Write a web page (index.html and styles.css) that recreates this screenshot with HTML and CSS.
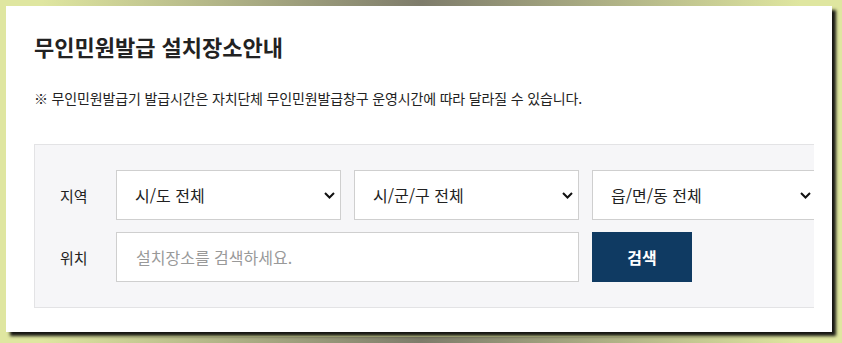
FILE: index.html
```html
<!DOCTYPE html>
<html lang="ko">
<head>
    <meta charset="UTF-8">
    <meta name="viewport" content="width=device-width, initial-scale=1.0">
    <title>무인민원발급 설치장소안내</title>
    <link rel="stylesheet" href="styles.css">
</head>
<body>
    <div class="card">
        <h2 class="title">무인민원발급 설치장소안내</h2>
        <p class="notice">※ 무인민원발급기 발급시간은 자치단체 무인민원발급창구 운영시간에 따라 달라질 수 있습니다.</p>

        <div class="search-clip">
            <div class="search-box">
                <div class="search-row">
                    <span class="label">지역</span>
                    <select class="select">
                        <option>시/도 전체</option>
                    </select>
                    <select class="select">
                        <option>시/군/구 전체</option>
                    </select>
                    <select class="select">
                        <option>읍/면/동 전체</option>
                    </select>
                </div>
                <div class="search-row">
                    <span class="label">위치</span>
                    <input type="text" class="keyword" placeholder="설치장소를 검색하세요.">
                    <button class="search-btn">검색</button>
                </div>
            </div>
        </div>
    </div>
</body>
</html>
```

FILE: styles.css
```css
html, body {
    height: 100%;
}
body {
    margin: 0;
    padding: 6px 0 0 6px;
    box-sizing: border-box;
    overflow: hidden;
    background-color: #dfe6a0;
    background-image:
        linear-gradient(to right, #dfe6a0 5%, #7e7c6b 50%, #dfe6a0 95%),
        linear-gradient(to right, #dfe6a0 5%, #7e7c6b 50%, #dfe6a0 95%);
    background-size: 100% 6px, 100% 6px;
    background-position: top, bottom;
    background-repeat: no-repeat;
    font-family: "Noto Sans CJK KR", "Noto Sans", sans-serif;
    color: #222;
}
.card {
    width: 826px;
    height: 326px;
    box-sizing: border-box;
    padding: 22px 18px 0 28px;
    background-color: #fff;
    box-shadow: 4px 4px 3px #161612;
}
.title {
    margin: 0;
    font-size: 22px;
    font-weight: 700;
    line-height: 36px;
    letter-spacing: 0;
    color: #222;
}
.notice {
    margin: 22px 0 0;
    font-size: 14px;
    line-height: 24px;
    letter-spacing: -0.15px;
    color: #222;
}
.search-clip {
    margin-top: 34px;
    overflow: hidden;
}
.search-box {
    width: 820px;
    box-sizing: border-box;
    padding: 25px 0 25px 25px;
    background-color: #f6f6f8;
    border: 1px solid #e3e3e5;
    display: flex;
    flex-direction: column;
    gap: 12px;
}
.search-row {
    display: flex;
    align-items: center;
    gap: 13px;
}
.label {
    width: 43px;
    font-size: 15px;
    color: #222;
}
.select {
    flex: none;
    width: 225px;
    height: 50px;
    padding: 0 30px 0 18px;
    border: 1px solid #cfcfcf;
    border-radius: 0;
    background: #fff url("data:image/svg+xml,%3Csvg xmlns='http://www.w3.org/2000/svg' width='11' height='7' viewBox='0 0 11 7'%3E%3Cpath d='M1 1l4.5 4.5L10 1' fill='none' stroke='%23111' stroke-width='2'/%3E%3C/svg%3E") no-repeat right 5px center;
    -webkit-appearance: none;
    appearance: none;
    font-family: inherit;
    font-size: 16px;
    color: #222;
    outline: none;
}
.keyword {
    flex: none;
    width: 463px;
    height: 50px;
    box-sizing: border-box;
    padding: 0 19px;
    border: 1px solid #cfcfcf;
    background: #fff;
    font-family: inherit;
    font-size: 16px;
    color: #222;
    outline: none;
}
.keyword::placeholder {
    color: #999;
}
.search-btn {
    flex: none;
    width: 100px;
    height: 50px;
    border: none;
    background-color: #0f3a62;
    color: #fff;
    font-family: inherit;
    font-size: 16px;
    font-weight: 700;
    cursor: pointer;
}
```
